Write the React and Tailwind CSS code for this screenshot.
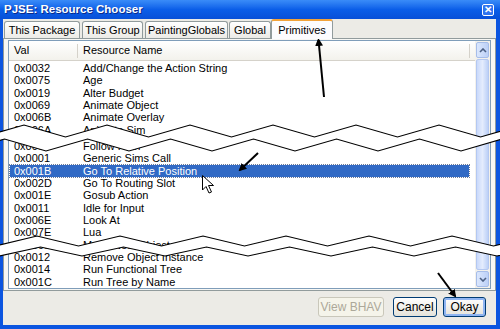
import React from 'react';

const topRows = [
  ['0x0032', 'Add/Change the Action String'],
  ['0x0075', 'Age'],
  ['0x0019', 'Alter Budget'],
  ['0x0069', 'Animate Object'],
  ['0x006B', 'Animate Overlay'],
  ['0x006A', 'Animate Sim'],
];

const bottomRows = [
  ['0x0068', 'Follow Path'],
  ['0x0001', 'Generic Sims Call'],
  ['0x001B', 'Go To Relative Position', true],
  ['0x002D', 'Go To Routing Slot'],
  ['0x001E', 'Gosub Action'],
  ['0x0011', 'Idle for Input'],
  ['0x006E', 'Look At'],
  ['0x007E', 'Lua'],
  ['0x0065', 'Make New Object'],
  ['0x0012', 'Remove Object Instance'],
  ['0x0014', 'Run Functional Tree'],
  ['0x001C', 'Run Tree by Name'],
];

// tab label, width, gap after
const tabs = [
  ['This Package', 'w-[76px] mr-[2px]'],
  ['This Group', 'w-[61px] mr-[2px]'],
  ['PaintingGlobals', 'w-[83px] mr-[1px]'],
  ['Global', 'w-[42px]'],
];

// zigzag helper for the torn-paper breaks
const zig = (start, step, yA, yB) => {
  const pts = [];
  let i = 0;
  for (let x = start; x < 560; x += step / 2) {
    pts.push([x, i % 2 === 0 ? yA : yB]);
    i++;
  }
  return pts;
};

const Break = ({ upper, lower }) => {
  const poly = [...upper, ...[...lower].reverse()].map((p) => p.join(',')).join(' ');
  return (
    <>
      <polygon points={poly} fill="white" />
      <polyline points={upper.map((p) => p.join(',')).join(' ')} fill="none" stroke="black" strokeWidth="1.2" />
      <polyline points={lower.map((p) => p.join(',')).join(' ')} fill="none" stroke="black" strokeWidth="1.2" />
    </>
  );
};

const Row = ({ val, name, selected }) => (
  <div
    className={`flex w-[459px] h-[12.33px] leading-[12.33px] ml-[1px] ${
      selected ? 'bg-[#316ac5] text-white outline outline-1 outline-dotted outline-[#6b7a99]' : 'text-black'
    }`}
  >
    <div className="w-[67px] pl-[4px]">{val}</div>
    <div className="pl-[6px]">{name}</div>
  </div>
);

const XpButton = ({ children, disabled, primary, className = '' }) => (
  <div
    className={`h-[20px] flex items-center justify-center rounded-[3px] border text-[12px] ${className} ${
      disabled
        ? 'border-[#c9c7ba] bg-[#f5f4ea] text-[#aca899]'
        : 'border-[#003c74] bg-gradient-to-b from-white to-[#e3e2da] text-black'
    } ${primary ? 'shadow-[inset_0_0_0_2px_#8fb5f2]' : ''}`}
  >
    {children}
  </div>
);

export default function App() {
  return (
    <div className="relative w-[500px] h-[329px] overflow-hidden bg-[#0b55e0] font-['Liberation_Sans'] text-[11px] select-none">
      {/* Title bar */}
      <div className="h-[19px] flex items-center justify-between pl-[4px] pr-[6px] bg-gradient-to-b from-[#3a8cf8] via-[#0b5ee8] to-[#0850d8]">
        <span className="text-white font-bold text-[11.5px] [text-shadow:1px_1px_0_#0a2a8a]">PJSE: Resource Chooser</span>
        <div className="w-[12px] h-[12px] rounded-[2px] border border-white bg-[#2f74ef] flex items-center justify-center text-white text-[10px] font-bold leading-none">
          ✕
        </div>
      </div>

      {/* Window body */}
      <div className="ml-[3px] mr-[4px] h-[306px] bg-[#ecebe6] flex flex-col">
        {/* Tabs */}
        <div className="h-[19px] flex items-end pl-[1px]">
          {tabs.map(([t, cls]) => (
            <div
              key={t}
              className={`h-[17px] ${cls} flex items-center justify-center border border-b-0 border-[#919b9c] rounded-t-[3px] bg-gradient-to-b from-white to-[#ecebe6] text-black`}
            >
              {t}
            </div>
          ))}
          <div className="h-[20px] w-[62px] -mb-[1px] flex items-center justify-center bg-[#fcfcfe] border-x border-[#919b9c] border-t-[2px] border-t-[#f2a33a] rounded-t-[3px] text-black relative z-10">
            Primitives
          </div>
        </div>

        {/* Tab page */}
        <div className="h-[253px] border border-[#919b9c] bg-[#f7f7f4] px-[4px] pt-[1px] pb-[2px]">
          <div className="h-[249px] border border-[#7f9db9] bg-white flex">
            <div className="flex-1 flex flex-col">
              {/* Header */}
              <div className="h-[20px] flex items-center border-b border-[#d5d2ca] bg-gradient-to-b from-white to-[#f3f2ec]">
                <div className="w-[69px] pl-[5px] border-r border-[#d5d2ca] h-[14px] flex items-center">Val</div>
                <div className="w-[392px] pl-[5px] border-r border-[#d5d2ca] h-[14px] flex items-center">Resource Name</div>
              </div>
              <div className="pt-[1px]">
                {topRows.map(([v, n]) => (
                  <Row key={v} val={v} name={n} />
                ))}
                <div className="h-[4px]" />
                {bottomRows.map(([v, n, s]) => (
                  <Row key={v} val={v} name={n} selected={s} />
                ))}
              </div>
            </div>
            {/* Scrollbar */}
            <div className="w-[15px] flex flex-col p-[1px] bg-[#f3f1ec]">
              <div className="h-[16px] rounded-[2px] border border-[#a6bde9] bg-gradient-to-r from-[#dbe7fd] to-[#bcd0f7] flex items-center justify-center">
                <svg width="8" height="5" viewBox="0 0 8 5">
                  <path d="M1 4 L4 1 L7 4" fill="none" stroke="#4d6185" strokeWidth="1.6" />
                </svg>
              </div>
              <div className="flex-1 my-[1px] rounded-[2px] border border-[#b4c8f1] bg-gradient-to-r from-[#c9d9fb] via-[#e4ecfd] to-[#bcd0f7]" />
              <div className="h-[16px] rounded-[2px] border border-[#a6bde9] bg-gradient-to-r from-[#dbe7fd] to-[#bcd0f7] flex items-center justify-center">
                <svg width="8" height="5" viewBox="0 0 8 5">
                  <path d="M1 1 L4 4 L7 1" fill="none" stroke="#4d6185" strokeWidth="1.6" />
                </svg>
              </div>
            </div>
          </div>
        </div>

        {/* Buttons */}
        <div className="flex-1 flex justify-end items-start pt-[6px] pr-[10px]">
          <XpButton disabled className="w-[66px]">View BHAV</XpButton>
          <XpButton className="w-[44px] ml-[9px]">Cancel</XpButton>
          <XpButton primary className="w-[43px] ml-[6px]">Okay</XpButton>
        </div>
      </div>

      {/* Annotations: torn breaks, arrows, cursor */}
      <svg className="absolute inset-0 pointer-events-none" width="500" height="329" viewBox="0 0 500 329">
        <defs>
          <marker id="head" markerWidth="8" markerHeight="8" refX="6" refY="4" orient="auto" markerUnits="userSpaceOnUse">
            <path d="M0 0 L8 4 L0 8 Z" fill="black" />
          </marker>
        </defs>
        <Break upper={zig(-17.5, 83, 137, 125)} lower={zig(-37, 83, 151, 139)} />
        <Break upper={zig(-4.5, 83, 246, 236)} lower={zig(-1, 83, 256, 247)} />
        <line x1="324" y1="97" x2="318.5" y2="40" stroke="black" strokeWidth="2" markerEnd="url(#head)" />
        <line x1="258" y1="153" x2="240" y2="170" stroke="black" strokeWidth="2" markerEnd="url(#head)" />
        <line x1="438" y1="273" x2="455" y2="296" stroke="black" strokeWidth="2" markerEnd="url(#head)" />
        <path
          d="M202.5 175.5 L202.5 190 L206 186.5 L209 193 L211.5 192 L208.5 185.5 L213.5 185.5 Z"
          fill="white"
          stroke="black"
          strokeWidth="1"
        />
      </svg>
    </div>
  );
}
